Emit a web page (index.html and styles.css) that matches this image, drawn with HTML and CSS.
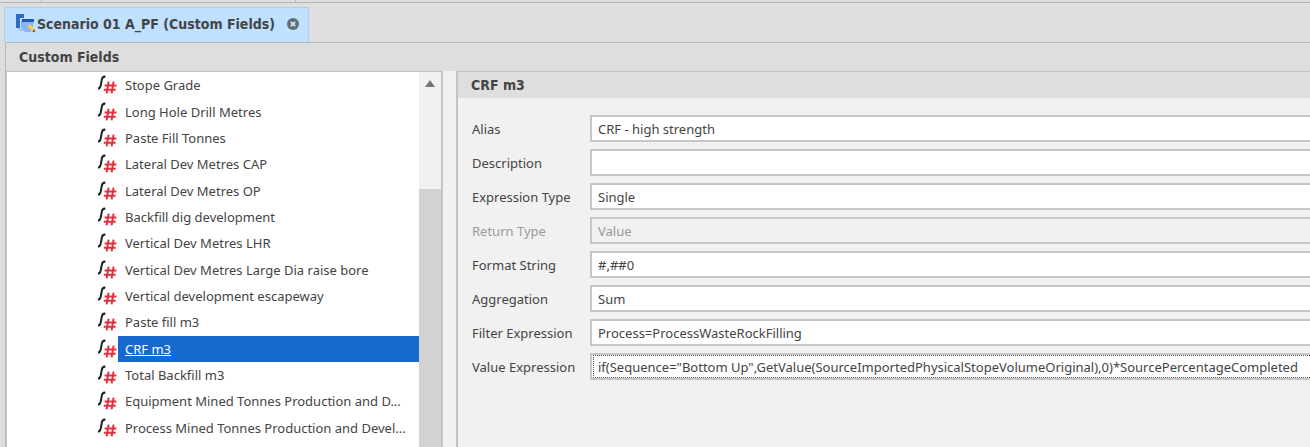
FILE: index.html
```html
<!DOCTYPE html>
<html lang="en">
<head>
    <meta charset="UTF-8">
    <meta name="viewport" content="width=device-width, initial-scale=1.0">
    <title>Custom Fields</title>
    <link rel="stylesheet" href="styles.css">
</head>
<body>
    <!-- shared tree icon: function sign with a number mark -->
    <svg class="defs" width="0" height="0" aria-hidden="true">
        <symbol id="fn" viewBox="0 0 20 20">
            <path d="M0 13.6 Q2 13.6 2.7 10.5 L3.9 4.4 Q4.5 1.2 7.4 1.7" fill="none" stroke="#222" stroke-width="2"/>
            <path d="M10.6 6.6 L8.6 18.4 M15.6 6.6 L13.6 18.4 M6.6 10.4 H18.4 M5.8 14.8 H17.6" fill="none" stroke="#e3303c" stroke-width="2"/>
        </symbol>
    </svg>

    <div class="app">
        <div class="toolbar-edge">
            <span></span>
            <span></span>
            <span></span>
        </div>

        <div class="tabs">
            <div class="tab">
                <svg class="tab-icon" width="20" height="20" viewBox="0 0 20 20" aria-hidden="true">
                    <path d="M0 0 H8 V4 H4 V14 H0 Z" fill="#2f6cc4"/>
                    <path d="M1 14 H6 L8 17 H4 Z" fill="#9cc6fa"/>
                    <path d="M5 7 H18 L17 12 L15 18 H9 L5 13 Z" fill="#86b6f7"/>
                    <path d="M6 5 H18 V8 H6 Z" fill="#1f58b5"/>
                    <path d="M11.5 12 L13.8 10.2 L18.6 15 L16 17.4 Z" fill="#ffd23e"/>
                    <path d="M16 17.4 L18.6 15 L19.4 18.4 Z" fill="#6b6657"/>
                </svg>
                <span>Scenario 01 A_PF (Custom Fields)</span>
                <button class="close" type="button" aria-label="Close tab">
                    <svg width="12" height="12" viewBox="0 0 12 12">
                        <circle cx="6" cy="6" r="6" fill="#646b73"/>
                        <path d="M3.8 3.8 L8.2 8.2 M8.2 3.8 L3.8 8.2" stroke="#d5e8fb" stroke-width="1.8"/>
                    </svg>
                </button>
            </div>
        </div>

        <div class="document">
            <h1 class="title">Custom Fields</h1>

            <div class="panes">
                <div class="tree-pane">
                    <ul class="tree">
                        <li><svg><use href="#fn"/></svg><span>Stope Grade</span></li>
                        <li><svg><use href="#fn"/></svg><span>Long Hole Drill Metres</span></li>
                        <li><svg><use href="#fn"/></svg><span>Paste Fill Tonnes</span></li>
                        <li><svg><use href="#fn"/></svg><span>Lateral Dev Metres CAP</span></li>
                        <li><svg><use href="#fn"/></svg><span>Lateral Dev Metres OP</span></li>
                        <li><svg><use href="#fn"/></svg><span>Backfill dig development</span></li>
                        <li><svg><use href="#fn"/></svg><span>Vertical Dev Metres LHR</span></li>
                        <li><svg><use href="#fn"/></svg><span>Vertical Dev Metres Large Dia raise bore</span></li>
                        <li><svg><use href="#fn"/></svg><span>Vertical development escapeway</span></li>
                        <li><svg><use href="#fn"/></svg><span>Paste fill m3</span></li>
                        <li class="selected"><svg><use href="#fn"/></svg><span><a href="#crf">CRF m3</a></span></li>
                        <li><svg><use href="#fn"/></svg><span>Total Backfill m3</span></li>
                        <li><svg><use href="#fn"/></svg><span>Equipment Mined Tonnes Production and D...</span></li>
                        <li><svg><use href="#fn"/></svg><span>Process Mined Tonnes Production and Devel...</span></li>
                    </ul>
                    <div class="scrollbar">
                        <button class="scroll-up" type="button" aria-label="Scroll up"></button>
                        <div class="thumb"></div>
                    </div>
                </div>

                <form class="details" id="crf">
                    <h2 class="title">CRF m3</h2>
                    <div class="fields">
                        <label for="alias">Alias</label>
                        <div class="box"><input id="alias" type="text" value="CRF - high strength"></div>

                        <label for="description">Description</label>
                        <div class="box"><input id="description" type="text"></div>

                        <label for="expressionType">Expression Type</label>
                        <div class="box"><select id="expressionType"><option>Single</option></select></div>

                        <label for="returnType" class="disabled">Return Type</label>
                        <div class="box disabled"><select id="returnType" disabled><option>Value</option></select></div>

                        <label for="format">Format String</label>
                        <div class="box"><input id="format" type="text" value="#,##0"></div>

                        <label for="aggregation">Aggregation</label>
                        <div class="box"><select id="aggregation"><option>Sum</option></select></div>

                        <label for="filter">Filter Expression</label>
                        <div class="box"><input id="filter" type="text" value="Process=ProcessWasteRockFilling"></div>

                        <label for="value">Value Expression</label>
                        <div class="box focused"><input id="value" type="text" value='if(Sequence="Bottom Up",GetValue(SourceImportedPhysicalStopeVolumeOriginal),0)*SourcePercentageCompleted'></div>
                    </div>
                </form>
            </div>
        </div>
    </div>
</body>
</html>
```
FILE: styles.css
```css
* {
    margin: 0;
    padding: 0;
    box-sizing: border-box;
}

body {
    font-family: Tahoma, "Noto Sans", sans-serif;
    font-size: 13px;
    line-height: 20px;
    color: #444;
    background: #dedede;
    overflow: hidden;
}

input,
select {
    font: inherit;
    color: inherit;
}

.defs {
    position: absolute;
}

.app {
    height: 100vh;
    display: flex;
    flex-direction: column;
}

.toolbar-edge {
    display: flex;
    height: 3px;
    border-bottom: 1px solid #b4b4b4;
}

.toolbar-edge span {
    border-right: 1px solid #b4b4b4;
    flex: 0 0 254px;
}

.toolbar-edge span:first-child {
    flex-basis: 42px;
}

.toolbar-edge span:last-child {
    flex: 1;
    border: none;
}

.tabs {
    display: flex;
    padding: 4px 0 0 4px;
}

.tab,
.title {
    font-family: Tahoma, "DejaVu Sans Condensed", "DejaVu Sans", sans-serif;
    font-stretch: condensed;
    font-size: 14px;
    font-weight: bold;
}

.tab {
    display: flex;
    align-items: center;
    height: 35px;
    padding: 0 9px 2px 11px;
    background: #bfe0ff;
    border: 1px solid #b0cfee;
    border-bottom: none;
    white-space: nowrap;
}

.tab-icon {
    margin-right: 1px;
}

.close {
    display: flex;
    margin-left: 12px;
    border: none;
    background: none;
}

.document {
    flex: 1;
    min-height: 0;
    display: flex;
    flex-direction: column;
    margin-left: 5px;
    border-top: 1px solid #b8b8b8;
    border-left: 1px solid #b8b8b8;
}

.title {
    line-height: 28px;
    padding: 0 13px;
    background: #dedede;
}

.panes {
    flex: 1;
    min-height: 0;
    display: flex;
    gap: 13px;
    background: #f1f1f1;
}

.tree-pane {
    flex: 0 0 437px;
    min-width: 0;
    display: flex;
    border: 2px solid #c4c4c4;
    border-width: 1px 2px 0 1px;
    background: #fff;
}

.tree {
    flex: 1;
    min-width: 0;
    display: grid;
    grid-template-columns: minmax(0, 1fr);
    grid-auto-rows: 1fr;
    padding: 0 0 6px 91px;
    list-style: none;
}

.tree li {
    display: flex;
    align-items: center;
    white-space: nowrap;
}

.tree svg {
    flex: none;
    width: 20px;
    height: 20px;
}

.tree span {
    flex: 1;
    align-self: stretch;
    display: flex;
    align-items: center;
    padding-left: 7px;
}

.tree .selected span {
    background: #1769d0;
}

.tree a {
    color: #fff;
}

.scrollbar {
    flex: 0 0 22px;
    display: flex;
    flex-direction: column;
    background: #f1f1f1;
}

.scroll-up {
    width: 0;
    height: 0;
    margin: 8px auto 102px;
    border: 5px solid transparent;
    border-top: none;
    border-bottom: 7px solid #777;
    background: none;
}

.thumb {
    flex: 1;
    background: #d2d2d2;
}

.details {
    flex: 1;
    min-width: 0;
    border-top: 1px solid #c4c4c4;
    border-left: 2px solid #c4c4c4;
}

.details .title {
    line-height: 26px;
}

.fields {
    display: grid;
    grid-template-columns: 105px 1fr;
    column-gap: 13px;
    row-gap: 7px;
    align-items: center;
    padding: 17px 0 0 14px;
    white-space: nowrap;
}

.disabled {
    color: #999;
}

.box {
    height: 27px;
    display: flex;
    border: 2px solid #c6c6c6;
    border-right: none;
    background: #fff;
}

.box input,
.box select {
    flex: 1;
    min-width: 0;
    padding: 0 6px;
    border: none;
    outline: none;
    background: none;
    appearance: none;
    opacity: 1;
}

.box.disabled {
    background: #f1f1f1;
}

.box.focused input {
    padding: 0 4px;
    margin-left: 1px;
    border: 1px dotted #555;
    border-right: none;
}
```
